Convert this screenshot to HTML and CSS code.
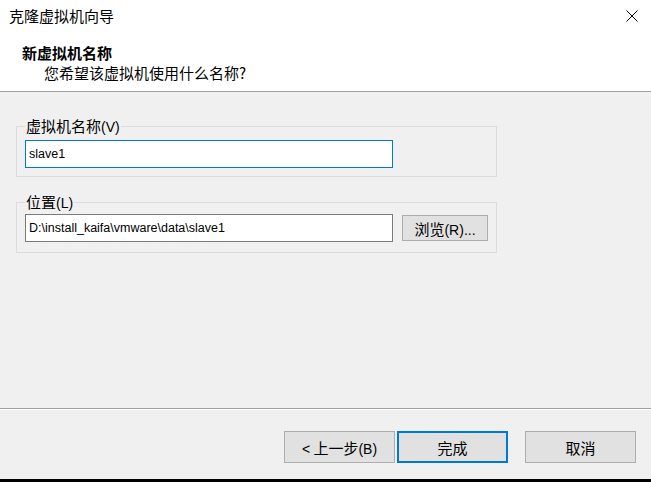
FILE: index.html
```html
<!DOCTYPE html>
<html lang="zh-CN">
	<head>
		<meta charset="UTF-8" />
		<title>克隆虚拟机向导</title>
		<link rel="stylesheet" href="styles.css">
	</head>
	<body>
		<div class="wizard">
			<div class="header">
				<div class="titlebar">
					<span class="title">克隆虚拟机向导</span>
					<svg class="close" width="12" height="12" viewBox="0 0 12 12">
						<path d="M0.5 0.5 L11.5 11.5 M11.5 0.5 L0.5 11.5" stroke="#000" stroke-width="1" fill="none" />
					</svg>
				</div>
				<div class="heading">新虚拟机名称</div>
				<div class="subheading">您希望该虚拟机使用什么名称?</div>
			</div>

			<div class="content">
				<fieldset class="group group-name">
					<legend>虚拟机名称<span class="latin">(V)</span></legend>
					<input type="text" class="field focused" value="slave1" />
				</fieldset>

				<fieldset class="group group-location">
					<legend>位置<span class="latin">(L)</span></legend>
					<div class="row">
						<input type="text" class="field" value="D:\install_kaifa\vmware\data\slave1" />
						<button class="btn btn-browse">浏览<span class="latin">(R)...</span></button>
					</div>
				</fieldset>
			</div>

			<div class="footer">
				<button class="btn btn-nav"><span class="latin">&lt;</span>&nbsp;上一步<span class="latin">(B)</span></button>
				<button class="btn btn-nav btn-default">完成</button>
				<button class="btn btn-nav btn-cancel">取消</button>
			</div>
			<div class="edge"></div>
		</div>
	</body>
</html>
```

FILE: styles.css
```css
:root {
	--bg-color: #f0f0f0;
	--text-color: #000000;
	--accent-color: #0078d7;
	--button-bg: #e1e1e1;
	--button-border: #adadad;
	--group-border: #dcdcdc;
	--line-color: #a0a0a0;
}
body {
	font-family: "Noto Sans CJK SC", "Noto Sans", sans-serif;
	font-size: 15px;
	color: var(--text-color);
	background-color: var(--bg-color);
	margin: 0;
	padding: 0;
	width: 651px;
	height: 482px;
	overflow: hidden;
}
.wizard {
	display: flex;
	flex-direction: column;
	height: 100%;
}
.latin {
	font-family: "Liberation Sans", sans-serif;
	font-size: 14px;
	line-height: 1;
}

/* header */
.header {
	height: 91px;
	background-color: #ffffff;
	border-bottom: 1px solid var(--line-color);
	flex-shrink: 0;
}
.titlebar {
	height: 32px;
	display: flex;
	align-items: center;
	justify-content: space-between;
	padding: 0 13px 0 9px;
}
.title {
	line-height: 20px;
	margin-top: -1px;
}
.heading {
	font-weight: bold;
	line-height: 20px;
	margin-top: 11px;
	padding-left: 22px;
}
.subheading {
	line-height: 20px;
	padding-left: 44px;
}

/* body */
.content {
	flex-grow: 1;
	padding: 26px 0 0 16px;
}
.group {
	width: 463px;
	margin: 0;
	border: 1px solid var(--group-border);
	padding: 5px 8px 9px 8px;
}
.group legend {
	padding: 0 1px;
	height: 16px;
	line-height: 16px;
}
.group-name {
	padding-top: 6px;
	padding-bottom: 8px;
}
.group-location {
	margin-top: 17px;
	padding-top: 4px;
	padding-bottom: 10px;
}
.row {
	display: flex;
	align-items: center;
	gap: 9px;
}
input.field {
	font-family: "Liberation Sans", "Noto Sans CJK SC", sans-serif;
	font-size: 12.5px;
	width: 368px;
	height: 28px;
	box-sizing: border-box;
	border: 1px solid #7a7a7a;
	background-color: #ffffff;
	padding: 0 3px;
	margin: 0;
	outline: none;
	display: block;
}
input.field.focused {
	border-color: var(--accent-color);
}

/* buttons */
.btn {
	font-family: "Noto Sans CJK SC", "Noto Sans", sans-serif;
	font-size: 15px;
	color: var(--text-color);
	background-color: var(--button-bg);
	border: 1px solid var(--button-border);
	box-sizing: border-box;
	padding: 0;
	margin: 0;
	cursor: pointer;
}
.btn-browse {
	width: 86px;
	height: 26px;
	flex-shrink: 0;
}
.footer {
	height: 71px;
	flex-shrink: 0;
	border-top: 1px solid var(--line-color);
	box-shadow: inset 0 1px 0 #ffffff;
	display: flex;
	align-items: flex-start;
	padding: 22px 15px 0 0;
	box-sizing: border-box;
	justify-content: flex-end;
	gap: 2px;
}
.btn-nav {
	width: 111px;
	height: 32px;
}
.btn-default {
	border: 2px solid var(--accent-color);
}
.btn-cancel {
	margin-left: 15px;
}
.edge {
	height: 3px;
	background-color: #000000;
	flex-shrink: 0;
}
```
